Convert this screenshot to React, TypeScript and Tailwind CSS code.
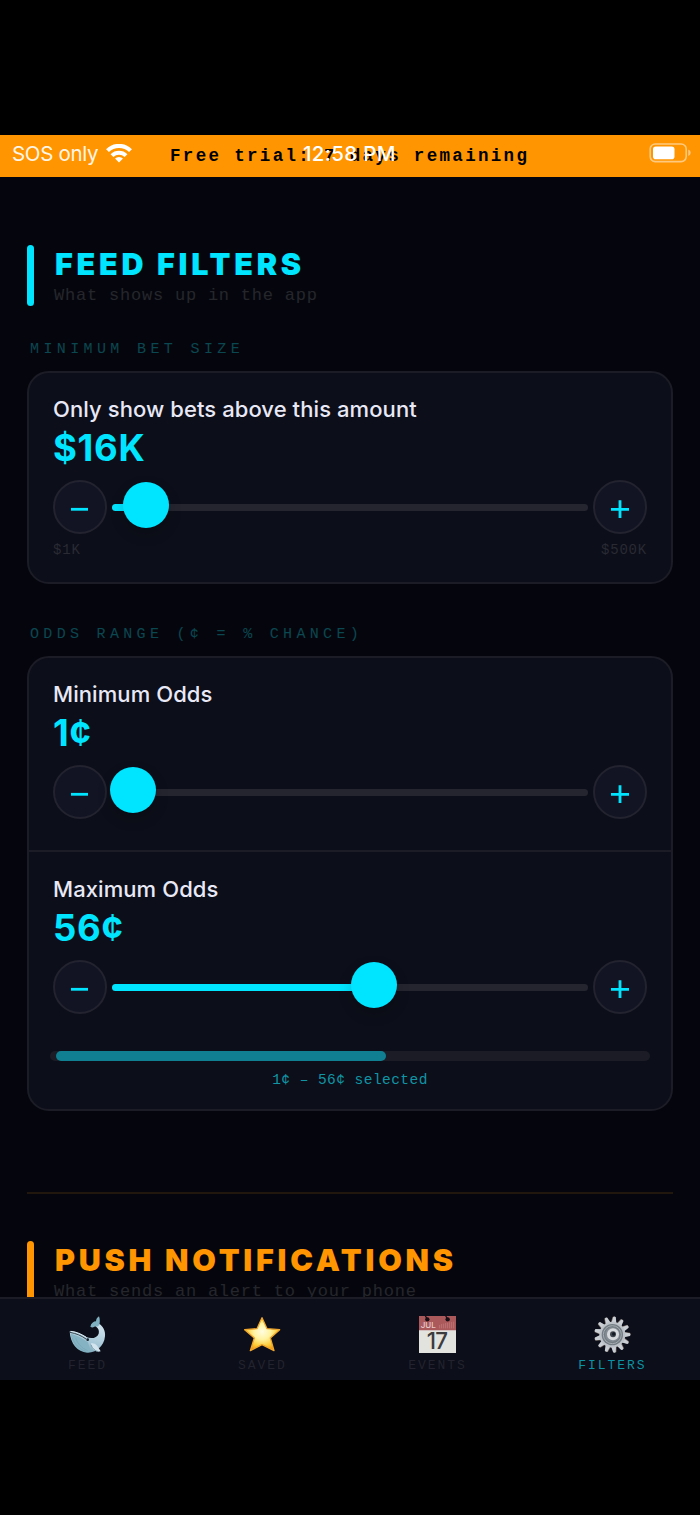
import { useState } from 'react';

const MONO = "font-['Liberation_Mono',monospace]";

type SliderRowProps = {
  value: number;
  min: number;
  max: number;
  step?: number;
  onChange: (v: number) => void;
};

function StepButton({ plus, onClick }: { plus?: boolean; onClick: () => void }) {
  return (
    <button
      onClick={onClick}
      aria-label={plus ? 'Increase' : 'Decrease'}
      className="w-[54px] h-[54px] shrink-0 rounded-full border-2 border-[#22232f] bg-[#121424] flex items-center justify-center pt-1"
    >
      <svg width="18" height="18" viewBox="0 0 18 18" stroke="#00e5ff" strokeWidth="2.8">
        <path d={plus ? 'M0 9.3h18M9 .3v18' : 'M0 9.3h17'} />
      </svg>
    </button>
  );
}

function SliderRow({ value, min, max, step = 1, onChange }: SliderRowProps) {
  const pct = (value - min) / (max - min);
  const clamp = (v: number) => Math.min(max, Math.max(min, v));
  return (
    <div className="flex items-center gap-[3px] h-[54px]">
      <StepButton onClick={() => onChange(clamp(value - step))} />
      <div className="relative flex-1 h-[46px] flex items-center px-[2px]">
        <div className="flex-1 h-[7px] rounded-full bg-[#24252f] overflow-hidden">
          <div className="h-full bg-[#00e5ff]" style={{ width: `${2 + pct * 96}%` }} />
        </div>
        <div
          className="absolute -top-[1.7px] w-[46px] h-[46px] rounded-full bg-[#00e5ff] shadow-[0_6px_14px_rgba(0,0,0,0.18)]"
          style={{ left: `calc(${pct * 100}% - ${pct * 46}px)` }}
        />
      </div>
      <StepButton plus onClick={() => onChange(clamp(value + step))} />
    </div>
  );
}

function Setting({ label, display, ...slider }: SliderRowProps & { label: string; display: string }) {
  return (
    <div className="pt-[22px] px-6">
      <div className="h-[29px] leading-[29px] text-[22px] font-medium tracking-[0.08px] text-[#e8e8f6]">{label}</div>
      <div className="h-[48px] leading-[48px] text-[36.5px] font-bold tracking-[0.7px] text-[#00e5ff]">{display}</div>
      <div className="mt-2">
        <SliderRow {...slider} />
      </div>
    </div>
  );
}

function Whale() {
  return (
    <svg width="37" height="37" viewBox="0 0 111 111">
      <defs>
        <linearGradient id="whale" x1="0.6" y1="0.1" x2="0.3" y2="1">
          <stop offset="0" stopColor="#c9dfea" />
          <stop offset="0.6" stopColor="#a3c5d5" />
          <stop offset="1" stopColor="#6f9fb1" />
        </linearGradient>
      </defs>
      <path d="M2 46C18 45 38 55 52 63C66 69 84 67 89 53C92 42 86 35 79 30L91 24C101 30 110 44 108 61C107 77 99 89 90 97C80 107 67 111 54 110C26 108 4 84 2 46Z" fill="url(#whale)" />
      <path d="M64 32C66 22 74 16 81 16C81 9 85 4 90 1C93 9 93 18 91 26C88 31 83 33 79 31C74 35 68 35 64 32Z" fill="#7fb0bf" />
      <path d="M5 53C20 57 40 65 56 78C60 84 60 96 68 107C36 114 8 90 5 53Z" fill="#86b3c3" />
      <path d="M10 66c8 20 22 34 40 40M20 66c6 18 18 30 36 38" fill="none" stroke="#6c9fb2" strokeWidth="1.5" />
      <path d="M3 49C20 52 38 59 51 69" fill="none" stroke="#34434c" strokeWidth="3" />
      <path d="M5 46C22 47 38 55 52 64" fill="none" stroke="#dcebf3" strokeWidth="3" />
      <circle cx="56" cy="71" r="4" fill="#17232b" />
      <path d="M66 82C78 79 87 90 95 106C86 109 77 105 71 98C67 93 65 88 66 82Z" fill="#d3e4ee" />
      <path d="M66 86C69 97 78 105 88 107" fill="none" stroke="#507b8c" strokeWidth="2" />
    </svg>
  );
}

function Star() {
  return (
    <svg width="37" height="37" viewBox="0 0 111 111">
      <defs>
        <radialGradient id="star" cx="0.5" cy="0.42" r="0.6">
          <stop offset="0" stopColor="#fffde0" />
          <stop offset="0.4" stopColor="#fff3a0" />
          <stop offset="0.75" stopColor="#fccb35" />
          <stop offset="1" stopColor="#f0930e" />
        </radialGradient>
      </defs>
      <path
        d="M54 5L69 38L107 41L79 66L90 104L54 86L19 104L31 66L2 41L39 38Z"
        fill="url(#star)"
        stroke="#f0a52c"
        strokeWidth="4"
        strokeLinejoin="round"
      />
    </svg>
  );
}

function Calendar() {
  return (
    <svg width="37" height="37" viewBox="0 0 111 111">
      <path d="M0 0h111v111H0z" fill="#e2e2df" />
      <path d="M0 0h111v43H0z" fill="#ac595b" />
      <path d="M19 0l6 9M80 0l6 9" stroke="#0c0e19" strokeWidth="4" />
      <circle cx="25" cy="10" r="6.5" fill="#160e15" />
      <circle cx="86" cy="10" r="6.5" fill="#160e15" />
      <text x="5" y="37" fontSize="24" fontWeight="500" fill="#e7cccc" className="font-[Inter,sans-serif]">JUL</text>
      <path d="M62 37V27M68 37V24M74 37V23M80 37V21M86 37V20M92 37V19M98 37V18M104 37V17" stroke="#c58182" strokeWidth="2" />
      <text x="54" y="100" fontSize="67" fontWeight="500" textAnchor="middle" letterSpacing="-2" fill="#3b3c3d" className="font-[Inter,sans-serif]">17</text>
    </svg>
  );
}

const teeth = Array.from({ length: 13 }, (_, i) => (i * 360) / 13 + 7);

function Gear() {
  return (
    <svg width="37" height="37" viewBox="0 0 111 111">
      {teeth.map(a => (
        <g key={a} transform={`rotate(${a} 55 56)`}>
          <path d="M46 22L49 3Q54 0 58 3L62 22Z" fill="#6f635e" />
          <path d="M48 22L51 3Q55 0 59 3L63 22Z" fill="#c9ced4" />
        </g>
      ))}
      <circle cx="55" cy="56" r="39" fill="#bcc2c8" />
      <circle cx="55" cy="56" r="32" fill="#737c83" />
      <circle cx="55" cy="56" r="27" fill="none" stroke="#a4abb1" strokeWidth="3" />
      <circle cx="55" cy="56" r="22" fill="#858d94" />
      <circle cx="57" cy="55" r="18" fill="#d7dadd" />
      <circle cx="57" cy="55" r="9" fill="#3e454c" />
      <circle cx="59" cy="54" r="5" fill="#151a25" />
    </svg>
  );
}

const tabs = [
  { name: 'FEED', icon: <Whale /> },
  { name: 'SAVED', icon: <Star /> },
  { name: 'EVENTS', icon: <Calendar /> },
  { name: 'FILTERS', icon: <Gear /> },
];

export default function App() {
  const [bet, setBet] = useState(16);
  const [minOdds, setMinOdds] = useState(1);
  const [maxOdds, setMaxOdds] = useState(56);
  const [tab, setTab] = useState('FILTERS');

  return (
    <div className="w-[700px] h-[1515px] bg-black pt-[135px] overflow-hidden font-[Inter,sans-serif]">
      {/* Trial banner with the status bar over it */}
      <header className="relative h-[42px] bg-[#ff9500]">
        <p className={`${MONO} pt-[9px] pl-[170px] leading-[25px] text-[17.5px] font-bold tracking-[2.33px] text-black whitespace-pre`}>
          Free trial: 7 days remaining
        </p>
        <div className="absolute inset-0 h-[37px] flex items-center text-[20.5px] text-[#fff6e8]">
          <span className="pl-3 pt-px tracking-[-0.3px] w-[94px] whitespace-nowrap">SOS only</span>
          <svg className="ml-3" width="26" height="19" viewBox="0 0 26 19" fill="none" stroke="#fff" strokeWidth="4.1">
            <path d="M1.5 6.6a16.4 16.4 0 0 1 23 0" />
            <path d="M6 11.6a10 10 0 0 1 14 0" />
            <path d="M13 18.6l-4-4a5.8 5.8 0 0 1 8 0z" fill="#fff" stroke="none" />
          </svg>
          <span className="absolute left-[303px] pt-px font-medium tracking-[0.3px] text-white whitespace-nowrap">12:58 PM</span>
          <svg className="absolute left-[649px] top-2" width="43" height="20" viewBox="0 0 43 20">
            <rect x="1.2" y="1" width="36" height="17.6" rx="5" fill="none" stroke="#ffca80" strokeWidth="1.6" />
            <rect x="4" y="3.5" width="21.5" height="12.7" rx="2.8" fill="#fff" />
            <path d="M39.3 6.5q2.4 1 2.4 3.3t-2.4 3.3z" fill="#ffca80" />
          </svg>
        </div>
      </header>

      <main className="h-[1120px] overflow-hidden bg-[#05060d] px-[27px] pt-[68px]">
        <div className="flex h-[61px]">
          <div className="w-[7px] rounded-full bg-[#00e5ff]" />
          <div className="pl-5">
            <h1 className="h-[39px] leading-[38px] pl-px text-[30.5px] font-black tracking-[3.75px] text-[#00e5ff]">FEED FILTERS</h1>
            <p className={`${MONO} leading-6 text-[17px] tracking-[0.79px] text-[#25262c]`}>What shows up in the app</p>
          </div>
        </div>

        <h2 className={`${MONO} mt-[33px] pl-[3px] h-8 leading-[22px] text-[15px] tracking-[4.38px] text-[#0b4750]`}>MINIMUM BET SIZE</h2>
        <section className="h-[213px] rounded-[22px] border-2 border-[#1b1c26] bg-[#0c0e19]">
          <Setting
            label="Only show bets above this amount"
            display={`$${bet}K`}
            value={bet}
            min={1}
            max={500}
            onChange={setBet}
          />
          <div className={`${MONO} mt-[6px] px-6 flex justify-between leading-5 text-[14px] tracking-[0.8px] text-[#292a34]`}>
            <span>$1K</span>
            <span>$500K</span>
          </div>
        </section>

        <h2 className={`${MONO} mt-[40px] pl-[3px] h-8 leading-[22px] text-[15px] tracking-[4.32px] text-[#0b4750]`}>ODDS RANGE (¢ = % CHANCE)</h2>
        <section className="h-[455px] rounded-[22px] border-2 border-[#1b1c26] bg-[#0c0e19]">
          <div className="h-[194px] border-b-2 border-[#1b1c26]">
            <Setting
              label="Minimum Odds"
              display={`${minOdds}¢`}
              value={minOdds}
              min={1}
              max={100}
              onChange={setMinOdds}
            />
          </div>
          <div className="pt-px">
            <Setting
              label="Maximum Odds"
              display={`${maxOdds}¢`}
              value={maxOdds}
              min={1}
              max={100}
              onChange={setMaxOdds}
            />
          </div>
          <div className="mt-[37px] mx-[21px] h-[10px] rounded-full bg-[#1b1c26]">
            <div
              className="h-full rounded-full bg-[#0f7f91]"
              style={{ marginLeft: `${minOdds}%`, width: `${maxOdds - minOdds}%` }}
            />
          </div>
          <p className={`${MONO} mt-2 text-center leading-[22px] text-[14.5px] tracking-[0.45px] text-[#1095a5]`}>
            {minOdds}¢ – {maxOdds}¢ selected
          </p>
        </section>

        <div className="mt-[81px] h-[2px] bg-[#22170d]" />

        <div className="mt-[47px] flex h-[61px]">
          <div className="w-[7px] rounded-full bg-[#ff9500]" />
          <div className="pl-5">
            <h1 className="h-[39px] leading-[38px] pl-px text-[30.5px] font-black tracking-[3.75px] text-[#ff9500]">PUSH NOTIFICATIONS</h1>
            <p className={`${MONO} leading-6 text-[17px] tracking-[0.79px] text-[#25262c]`}>What sends an alert to your phone</p>
          </div>
        </div>
      </main>

      <nav className="h-[83px] grid grid-cols-4 border-t-2 border-[#1b1c26] bg-[#0c0e19]">
        {tabs.map(t => (
          <button key={t.name} onClick={() => setTab(t.name)} className="flex flex-col items-center pt-[17px]">
            {t.icon}
            <span
              className={`${MONO} mt-[5px] leading-4 text-[13px] tracking-[1.95px] ${t.name === tab ? 'text-[#0b92a3]' : 'text-[#22232e]'}`}
            >
              {t.name}
            </span>
          </button>
        ))}
      </nav>
    </div>
  );
}
